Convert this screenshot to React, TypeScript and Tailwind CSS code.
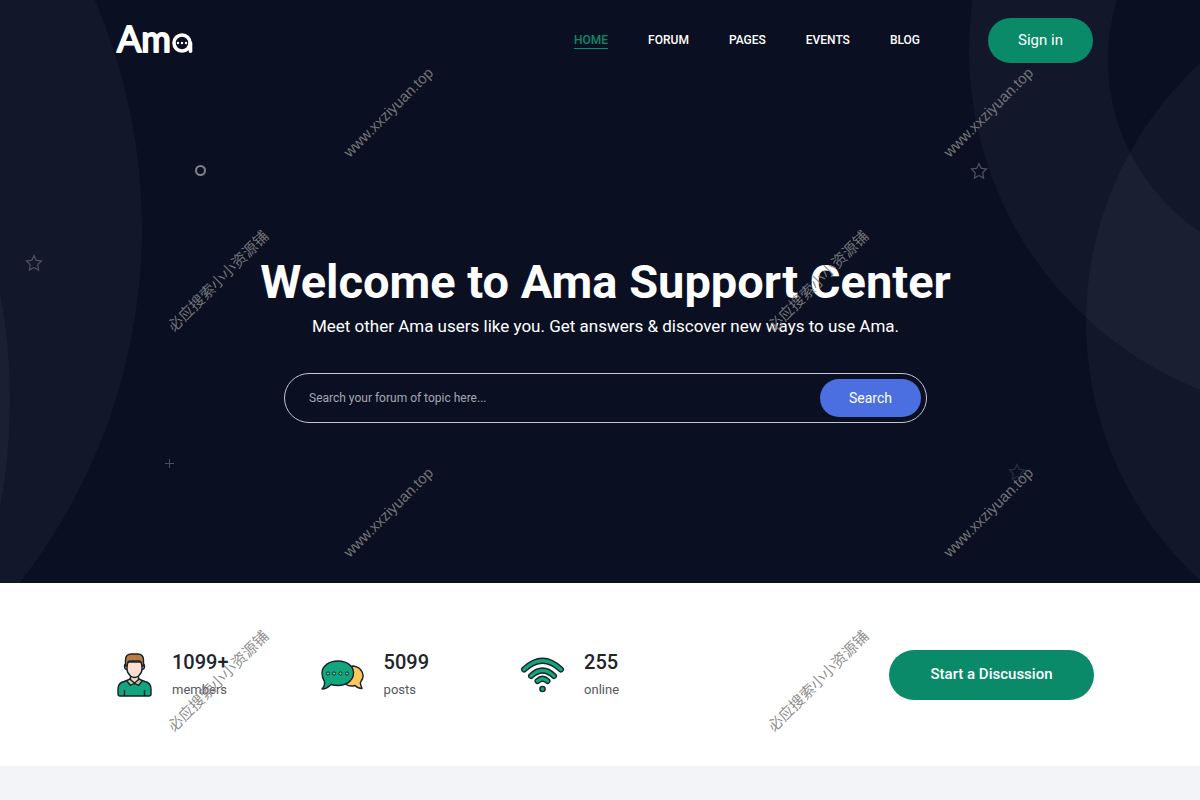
import React from "react";

const NAV_LINKS = ["Home", "Forum", "Pages", "Events", "Blog"];

const Logo = () => (
  <a href="#" aria-label="Ama" className="block">
    <svg
      width="78"
      height="46"
      viewBox="0 -8 78 46"
      fill="none"
      stroke="#fff"
      className="overflow-visible"
    >
      <text
        x="1"
        y="27"
        fill="#fff"
        strokeWidth="2"
        strokeLinejoin="round"
        className="font-['Lato'] text-[36px] font-normal"
      >
        Am
      </text>
      {/* speech bubble mark */}
      <circle cx="66" cy="18" r="8" strokeWidth="3.6" />
      <path d="M74.500 18v8.2" strokeWidth="3.6" strokeLinecap="round" />
      <g fill="#fff" stroke="none">
        <circle cx="62" cy="18" r="1.2" />
        <circle cx="66" cy="18" r="1.2" />
        <circle cx="70" cy="18" r="1.2" />
      </g>
    </svg>
  </a>
);

const STAR =
  "M9 1.500l2 4.500q.2.400.7.400l4.800.6-3.500 3.300q-.4.400-.2.900l.8 4.800-4.100-2.300q-.5-.3-1 0L4.400 16l.8-4.800q.1-.5-.3-.9L1.500 7l4.800-.6q.5 0 .7-.4z";

const Star = ({ className }: { className: string }) => (
  <svg
    width="18"
    height="18"
    viewBox="0 0 18 18"
    fill="none"
    stroke="currentColor"
    strokeWidth="1.2"
    className={className}
  >
    <path d={STAR} />
  </svg>
);

const HeroShapes = () => (
  <div className="absolute inset-0 overflow-hidden" aria-hidden="true">
    <svg
      width="200"
      height="583"
      viewBox="0 0 200 583"
      fill="#e4e6ff"
      fillOpacity="0.04"
      className="absolute left-0 top-0"
    >
      <circle cx="-433" cy="228" r="575" />
      <circle cx="-570" cy="400" r="580" />
    </svg>
    <svg
      width="240"
      height="583"
      viewBox="960 0 240 583"
      fill="#e4e6ff"
      fillOpacity="0.04"
      className="absolute right-0 top-0"
    >
      {/* ring */}
      <path
        fillRule="evenodd"
        d="M969 50a365 365 0 1 0 730 0a365 365 0 1 0 -730 0zM1108 60a206 206 0 1 0 412 0a206 206 0 1 0 -412 0z"
      />
      <circle cx="1436" cy="322" r="350" />
    </svg>
    <Star className="absolute left-[25px] top-[254px] text-[#50535f]" />
    <Star className="absolute right-[212px] top-[162px] text-[#50535f]" />
    <Star className="absolute right-[174px] top-[463px] text-[#2b2f3d]" />
    <span className="absolute left-[195px] top-[165px] size-[11px] rounded-full border-2 border-[#80838e]" />
    <svg
      width="9"
      height="9"
      viewBox="0 0 9 9"
      stroke="#4a4d5a"
      className="absolute left-[165px] top-[459px]"
    >
      <path d="M0 4.5h9M4.5 0v9" />
    </svg>
  </div>
);

const MemberIcon = () => (
  <svg width="35" height="44" viewBox="0 0 35 44" stroke="#17212b" strokeWidth="1.4" strokeLinejoin="round">
    <path d="M1 41V36q0-6 6-7.500l7-2.500h7l7 2.500q6 1.500 6 7.500v5q0 2-2 2H3q-2 0-2-2z" fill="#12a67c" />
    <path d="M13.500 22v5l4 4 4-4v-5z" fill="#f6d3c3" />
    <path d="M12.500 26l-2.500 2 3.500 4.500 4-2.500 4 2.500L25 28l-2.500-2-5 4z" fill="#b5d79b" />
    <path d="M9.500 11q-2-.5-2 2.500t3 3M25.500 11q2-.5 2 2.500t-3 3" fill="#f6d3c3" />
    <path d="M10 9v7q0 4 3.500 7 4 3 8 0 3.500-3 3.500-7V9z" fill="#fbdfd3" />
    <path d="M8.500 13V7q0-6 6-6h6q6 0 6 6v6h-1.500l-1-4q-1-1-2-1h-9q-1 0-2 1l-1 4z" fill="#b97d43" />
    <path d="M7.500 37v6M27.500 37v6" fill="none" />
  </svg>
);

const ChatIcon = () => (
  <svg width="43" height="30" viewBox="0 0 43 30" stroke="#17212b" strokeWidth="1.4" strokeLinejoin="round">
    <path d="M31 6q5 0 8.500 3.500 5 6 .5 12-1 1-.5 2.500l1.500 4.500q-4 0-7-3-5 1.500-9-1z" fill="#fcc75c" />
    <path d="M17 1C26 1 32.500 6 32.500 13S26 25.500 17 25.500q-4 0-7-1Q6 29 1 29q3-3 2.500-7.500Q1 18 1 13C1 6 8 1 17 1z" fill="#12a67c" />
    <g fill="#64d4af" strokeWidth="1">
      <circle cx="7" cy="13.500" r="1.600" />
      <circle cx="13" cy="13.500" r="1.600" />
      <circle cx="19.500" cy="13.500" r="1.600" />
      <circle cx="26" cy="13.500" r="1.600" />
    </g>
  </svg>
);

const WIFI = "M3 12.500Q21.500-5 40 12.500M10 19q11.500-11 23 0M16.500 24q5-4.500 10 0";

const WifiIcon = () => (
  <svg width="43" height="36" viewBox="0 0 43 36" fill="none" strokeLinecap="round">
    <path d={WIFI} stroke="#17212b" strokeWidth="6" />
    <path d={WIFI} stroke="#12a67c" strokeWidth="3.400" />
    <circle cx="21.500" cy="32" r="2.600" fill="#12a67c" stroke="#17212b" strokeWidth="1.400" />
  </svg>
);

const STATS = [
  { value: "1099+", label: "members", icon: <MemberIcon /> },
  { value: "5099", label: "posts", icon: <ChatIcon /> },
  { value: "255", label: "online", icon: <WifiIcon /> },
];

const MARK_STYLE =
  "absolute -translate-x-1/2 -translate-y-1/2 -rotate-45 whitespace-nowrap text-[15px] leading-none";

const Watermark = () => (
  <div className="pointer-events-none absolute inset-0 z-10 grid grid-cols-2 grid-rows-[400px_400px] overflow-hidden font-['Liberation_Sans','Noto_Sans_CJK_SC',sans-serif] text-[#808080]/90">
    {[0, 1, 2, 3].map((tile) => (
      <div key={tile} className="relative">
        <span className={`${MARK_STYLE} left-[388px] top-[112px]`}>www.xxziyuan.top</span>
        <span className={`${MARK_STYLE} left-[218px] top-[281px]`}>必应搜索小小资源铺</span>
      </div>
    ))}
  </div>
);

const App = () => {
  return (
    <div className="relative min-h-screen bg-[#f2f4f7] font-['Roboto',sans-serif]">
      <section className="relative bg-[#0a1022] pb-40 text-white">
        <HeroShapes />
        <header className="relative flex h-20 items-center justify-between pl-[116px] pr-[107px]">
          <Logo />
          <div className="flex items-center gap-[68px]">
            <nav className="flex gap-10 text-xs font-medium uppercase">
              {NAV_LINKS.map((link, index) => (
                <a
                  key={link}
                  href="#"
                  className={
                    index === 0
                      ? "border-b border-[#0b8a69] text-[#0b8a69]"
                      : "border-b border-transparent"
                  }
                >
                  {link}
                </a>
              ))}
            </nav>
            <button className="h-[45px] w-[105px] rounded-full bg-[#0a8a69] text-[15px]">
              Sign in
            </button>
          </div>
        </header>

        <div className="relative flex flex-col items-center pl-[11px] pt-[172px] text-center">
          <h1 className="text-[47px] font-bold leading-[60px]">
            Welcome to Ama Support Center
          </h1>
          <p className="text-[17px] leading-7">
            Meet other Ama users like you. Get answers &amp; discover new ways to use Ama.
          </p>
          <form className="mt-[33px] flex h-[50px] w-[643px] max-w-full items-center rounded-full border border-[#c3c6d2] pl-6 pr-[5px]">
            <input
              type="text"
              aria-label="Search"
              placeholder="Search your forum of topic here..."
              className="min-w-0 flex-1 text-xs outline-none placeholder:text-[#a4a7b1]"
            />
            <button
              type="button"
              className="h-[38px] w-[101px] rounded-full bg-[#4b6fe0] text-sm"
            >
              Search
            </button>
          </form>
        </div>
      </section>

      <section className="flex h-[183px] items-center justify-between bg-white pl-[117px] pr-[106px]">
        <ul className="flex gap-[92px]">
          {STATS.map((item) => (
            <li key={item.label} className="flex items-center gap-5">
              {item.icon}
              <div className="pt-0.5">
                <h2 className="text-xl font-medium leading-7 text-[#20242b]">{item.value}</h2>
                <p className="text-[13px] leading-7 text-[#54575c]">{item.label}</p>
              </div>
            </li>
          ))}
        </ul>
        <button className="h-[50px] w-[205px] rounded-full bg-[#0a8a69] text-[15px] font-medium text-white">
          Start a Discussion
        </button>
      </section>

      <Watermark />
    </div>
  );
};

export default App;
